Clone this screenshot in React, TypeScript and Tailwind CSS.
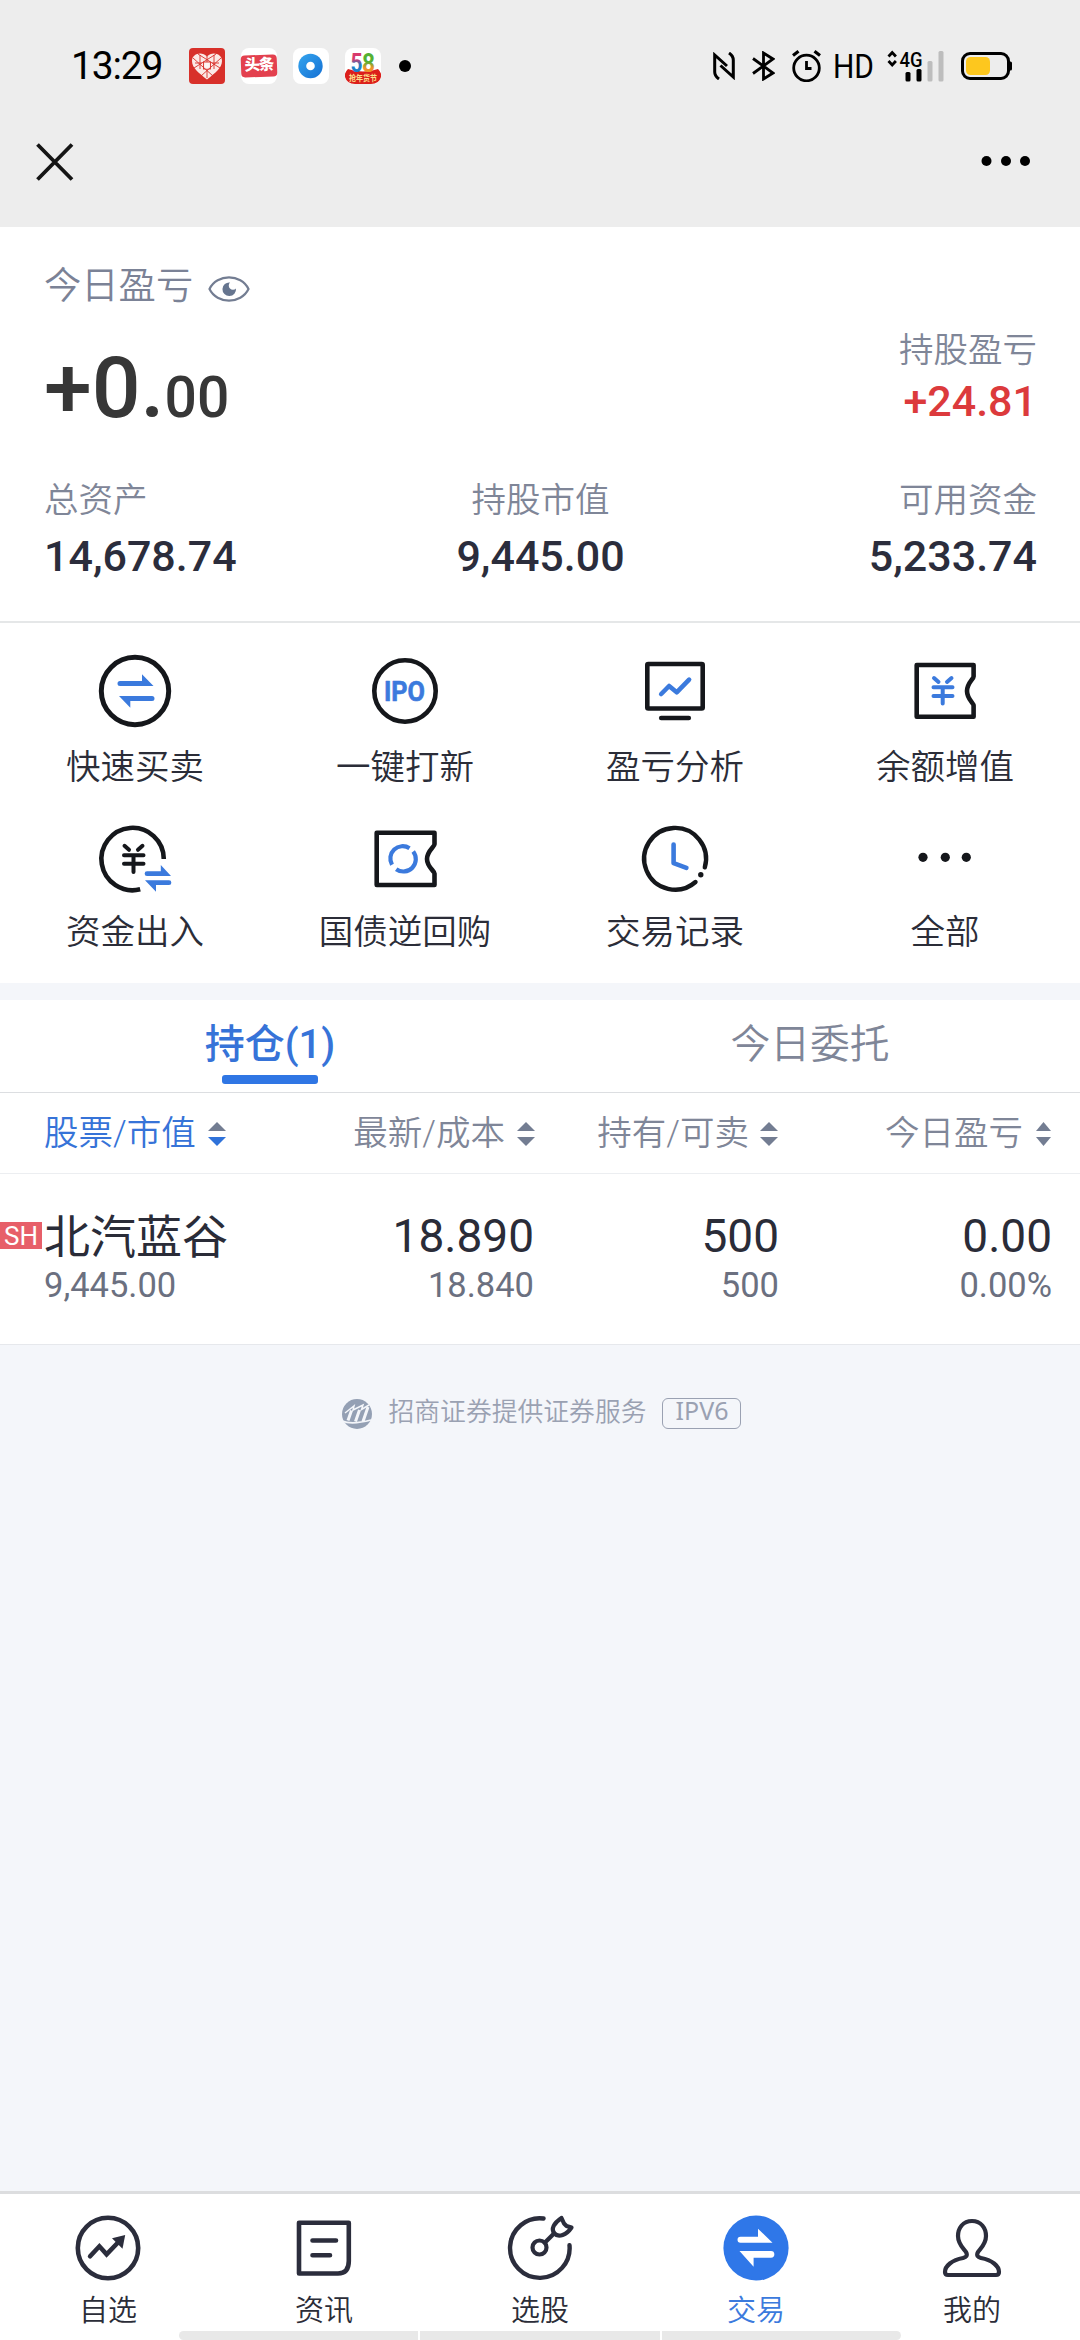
import type { ReactNode } from 'react';

const StatusBar = () => {
    return (
        <div className="flex items-center justify-between h-[132px] pl-[71px] pr-[67px] text-black">
            <div className="flex items-center h-9">
                <span className="w-[118px] text-[39px] leading-9 tracking-[-1.2px]">13:29</span>

                <div className="flex items-center gap-4">
                    <svg width="36" height="36" viewBox="0 0 36 36">
                        <rect width="36" height="36" rx="4" fill="#d8302a" />
                        <path d="M18 31.500C10 25 3 20 3 13c0-7.500 10-10 15-4.500C23 3 33 5.500 33 13c0 7-7 12-15 18.500z" fill="#fbe9e6" />
                        <g stroke="#d8302a" strokeWidth="0.900" fill="none">
                            <path d="M4 10l20 18M9 6l22 14M32 10L12 28M27 6L5 20M18 8v6M18 21v9M11 7v14M25 7v14M6 15h7M23 15h7" />
                            <rect x="14.500" y="14" width="7" height="7" />
                        </g>
                        <path d="M16 16h4M15.500 18h5M16.500 20h3" stroke="#fff" strokeWidth="1" />
                    </svg>

                    <div className="flex items-center w-9 h-9 rounded-lg bg-white">
                        <div className="flex items-center justify-center w-9 h-[22px] rounded-sm bg-[#e3404e] -rotate-2 text-white text-[15.500px] tracking-[-1px] leading-none font-black">
                            头条
                        </div>
                    </div>

                    <svg width="36" height="36" viewBox="0 0 36 36">
                        <defs>
                            <linearGradient id="ring" x1="0" y1="0" x2="1" y2="1">
                                <stop offset="0" stopColor="#35a5ee" />
                                <stop offset="1" stopColor="#1470d4" />
                            </linearGradient>
                        </defs>
                        <rect width="36" height="36" rx="8" fill="#fff" />
                        <circle cx="17.500" cy="18" r="12.200" fill="url(#ring)" />
                        <circle cx="17.500" cy="18" r="4.300" fill="#fff" />
                    </svg>

                    <svg width="36" height="36" viewBox="0 0 36 36">
                        <defs>
                            <linearGradient id="five" x1="0" y1="0" x2="0" y2="1">
                                <stop offset="0.350" stopColor="#d83a6c" />
                                <stop offset="0.550" stopColor="#1f7fc8" />
                            </linearGradient>
                            <linearGradient id="eight" x1="0" y1="0" x2="0" y2="1">
                                <stop offset="0.450" stopColor="#55b033" />
                                <stop offset="0.650" stopColor="#f0922a" />
                            </linearGradient>
                        </defs>
                        <rect width="36" height="36" rx="8" fill="#fff" />
                        <path d="M3 21q-4 4-3 8 2 7 10 7h16q8 0 10-7 1-4-3-8-15 5-30 0z" fill="#dc1f1b" />
                        <text x="5.500" y="24" fontSize="25" fontWeight="700" textLength="12" lengthAdjust="spacingAndGlyphs" fill="url(#five)">5</text>
                        <text x="17" y="24" fontSize="25" fontWeight="700" textLength="13" lengthAdjust="spacingAndGlyphs" fill="url(#eight)">8</text>
                        <text x="4" y="33" fontSize="8" fontWeight="700" textLength="28" lengthAdjust="spacingAndGlyphs" fill="#fbe08b">抢年货节</text>
                    </svg>
                </div>

                <span className="w-3 h-3 ml-[18px] rounded-full bg-black" />
            </div>

            <div className="flex items-center h-9">
                <svg width="22" height="28" viewBox="0 0 22 28" fill="none" stroke="#000" strokeWidth="3">
                    <path d="M6 27C3 25 1.700 23 1.700 20V3L14 14" />
                    <path d="M16 1c3 2 4.300 4 4.300 7v17L7.500 13.500" />
                </svg>
                <svg className="ml-[17px]" width="23" height="30" viewBox="0 0 23 30" fill="none" stroke="#000" strokeWidth="2.8">
                    <path d="M1 7.500l20 14.500-9.500 6V2L21 8 1 22.500" />
                </svg>
                <svg className="ml-[17px]" width="30" height="32" viewBox="0 0 30 32" fill="none" stroke="#000" strokeWidth="2.8">
                    <circle cx="14.500" cy="18" r="12.800" />
                    <path d="M1 5.500L6.500 1.300M28 5.500l-5.500-4.200" strokeWidth="3.2" />
                    <path d="M14.500 11v7.500h5" />
                </svg>
                <svg className="ml-[11px] overflow-visible" width="54" height="44" viewBox="0 0 54 44">
                    <text x="0" y="34" fontSize="33.500" textLength="41" lengthAdjust="spacingAndGlyphs">HD</text>
                </svg>

                <svg className="overflow-visible" width="58" height="32" viewBox="0 0 58 32">
                    <path d="M1.500 6.500l3.700-4 3.700 4M1.500 11l3.700 4 3.700-4" fill="none" stroke="#000" strokeWidth="2.8" />
                    <text x="12.500" y="16.500" fontSize="20" fontWeight="500" textLength="23" lengthAdjust="spacingAndGlyphs">4G</text>
                    <rect x="18.500" y="22" width="5" height="9.500" rx="1.500" />
                    <rect x="29.500" y="19" width="5" height="12.500" rx="1.500" />
                    <rect x="40.500" y="11" width="5" height="20.500" rx="1.500" fill="#bdbdbd" />
                    <rect x="51.500" y="1" width="5" height="30.500" rx="1.500" fill="#bdbdbd" />
                </svg>

                <svg className="ml-[16px]" width="52" height="28" viewBox="0 0 52 28">
                    <rect x="1.500" y="1.500" width="46" height="25" rx="7.500" fill="none" stroke="#000" strokeWidth="3" />
                    <rect x="5" y="5" width="24" height="18" rx="4.500" fill="#fdc71e" />
                    <path d="M48 9.500h1.500q1.500 0 1.500 1.500v6q0 1.500-1.500 1.500H48z" />
                </svg>
            </div>
        </div>
    );
};

const TitleBar = () => {
    return (
        <div className="flex items-start justify-between h-[95px] pt-[11px] px-9">
            <svg width="38" height="38" viewBox="0 0 38 38" stroke="#151515" strokeWidth="3.800">
                <path d="M1.500 1.500l34.500 35M36 1.500l-34.500 35" />
            </svg>
            <svg className="mr-[13px]" width="50" height="38" viewBox="0 0 50 38">
                <circle cx="5.500" cy="18" r="5" />
                <circle cx="25" cy="18" r="5" />
                <circle cx="44" cy="18" r="5" />
            </svg>
        </div>
    );
};

const Summary = () => {
    return (
        <section className="h-[394px] pl-11 pr-[43px] bg-white">
            <div className="flex items-center h-[114px] pt-1.5">
                <span className="text-[37.300px] text-[#7b8296] font-[350]">今日盈亏</span>
                <svg className="ml-[15px] mt-[3px]" width="42" height="28" viewBox="-21 -14 42 28">
                    <path d="M-19.500 0C-12-15.500 12-15.500 19.500 0 12 15.500-12 15.500-19.500 0z" fill="none" stroke="#737d92" strokeWidth="2.200" />
                    <path d="M1-6.500A6.800 6.800 0 1 0 7-.500 4 4 0 0 1 1-6.500z" fill="#66758f" />
                </svg>
            </div>

            <div className="flex justify-between h-[136px]">
                <p className="pt-px font-medium text-[86px] leading-[92px] text-[#373737]">
                    +0.<span className="text-[57px]">00</span>
                </p>
                <div className="flex flex-col items-end">
                    <span className="text-[34.500px] leading-[40px] mt-[-11px] text-[#7f8698] font-[350]">持股盈亏</span>
                    <span className="text-[43px] leading-[50px] mt-[6px] font-medium text-[#dc3a3c]">+24.81</span>
                </div>
            </div>

            <div className="flex justify-between">
                <div className="flex flex-col items-start w-1/3">
                    <span className="text-[34.500px] leading-[44px] pt-px text-[#7f8698] font-[350]">总资产</span>
                    <span className="text-[43px] leading-[50px] mt-[9px] font-medium text-[#2b2d3c]">14,678.74</span>
                </div>
                <div className="flex flex-col items-center w-1/3">
                    <span className="text-[34.500px] leading-[44px] pt-px text-[#7f8698] font-[350]">持股市值</span>
                    <span className="text-[43px] leading-[50px] mt-[9px] font-medium text-[#2b2d3c]">9,445.00</span>
                </div>
                <div className="flex flex-col items-end w-1/3">
                    <span className="text-[34.500px] leading-[44px] pt-px text-[#7f8698] font-[350]">可用资金</span>
                    <span className="text-[43px] leading-[50px] mt-[9px] font-medium text-[#2b2d3c]">5,233.74</span>
                </div>
            </div>
        </section>
    );
};

const MenuIcon = ({ children }: { children: ReactNode }) => (
    <svg width="76" height="76" viewBox="-38 -38 76 76" fill="none" stroke="#15171b" strokeWidth="4.600" strokeLinecap="round" strokeLinejoin="round">
        {children}
    </svg>
);

const menu = [
    {
        label: '快速买卖',
        icon: (
            <MenuIcon>
                <circle r="33.700" strokeWidth="5" />
                <path d="M-15-10H7v-6.700L18.500-5H-15a2.500 2.500 0 0 1 0-5zM-16 5h33a2.500 2.500 0 0 1 0 5H-4.700v6.700z" fill="#3b7add" stroke="none" />
            </MenuIcon>
        ),
    },
    {
        label: '一键打新',
        icon: (
            <MenuIcon>
                <circle r="30.700" />
                <text x="-21" y="10.300" fontSize="28" fontWeight="700" textLength="41" lengthAdjust="spacingAndGlyphs" fill="#3b7add" stroke="#3b7add" strokeWidth="0.600">IPO</text>
            </MenuIcon>
        ),
    },
    {
        label: '盈亏分析',
        icon: (
            <MenuIcon>
                <rect x="-27.700" y="-27" width="55.400" height="44.500" rx="1" />
                <path d="M-13.800 27h27.600" />
                <path d="M-13.800 3l7.900-8 7.600 6.300 12.400-12.600" stroke="#3b7add" />
            </MenuIcon>
        ),
    },
    {
        label: '余额增值',
        icon: (
            <MenuIcon>
                <path d="M-28.300-26H28.600v11.500C28.600-12 22-8 22 0s6.600 12 6.600 14.500V25.700H-28.300z" />
                <path d="M-11-13l4.500 4M6.500-13L2-9M-11.500-3.700H7.500M-11.500 5H7.500M-2.300-3.700V12.500" stroke="#3b7add" strokeWidth="4" />
            </MenuIcon>
        ),
    },
    {
        label: '资金出入',
        icon: (
            <MenuIcon>
                <path d="M28.800 0A31.200 31.200 0 1 0 5.200 30.300" strokeLinecap="butt" />
                <path d="M-10.500-13.200l4.500 4M7.500-13.200l-4.500 4M-11-3.700H8.500M-11 4.800H8.500M-1.500-3.700V13" strokeWidth="4" />
                <path d="M12 12.300h13.800V6L36 17H12a2.300 2.300 0 0 1 0-4.700zM10 21.300h24a2.300 2.300 0 0 1 0 4.700H21v6.700z" fill="#3b7add" stroke="none" />
            </MenuIcon>
        ),
    },
    {
        label: '国债逆回购',
        icon: (
            <MenuIcon>
                <path d="M-28.300-26.200H29.500v11.500C29.500-12.200 22-8 22 0s7.500 12 7.500 14.500V26H-28.300z" />
                <path d="M-13 5.800A12.400 12.400 0 0 1 4.500-10.800M8.200-7.500A12.400 12.400 0 0 1-8.800 10.200" stroke="#3b7add" strokeWidth="4.200" strokeLinecap="butt" />
            </MenuIcon>
        ),
    },
    {
        label: '交易记录',
        icon: (
            <MenuIcon>
                <path d="M29.800 8.300A30.900 30.900 0 1 0 20.500 23" strokeWidth="4.400" />
                <circle cx="25.800" cy="15.700" r="2.700" fill="#15171b" stroke="none" />
                <path d="M-1.400-14.500V4.200l12.800 4.600" stroke="#3b7add" />
            </MenuIcon>
        ),
    },
    {
        label: '全部',
        icon: (
            <MenuIcon>
                <g fill="#15171b" stroke="none">
                    <circle cx="-22" cy="-1.700" r="4.600" />
                    <circle cx="0.300" cy="-1.700" r="4.600" />
                    <circle cx="21.300" cy="-1.700" r="4.600" />
                </g>
            </MenuIcon>
        ),
    },
];

const Menu = () => {
    return (
        <section className="grid grid-cols-4 content-start gap-y-[27px] h-[362px] pt-[30px] border-t-2 border-[#e5e7e8] bg-white">
            {menu.map((item, i) => (
                <div key={item.label} className="flex flex-col items-center h-[141px]">
                    {item.icon}
                    <span className={i < 4 ? 'mt-[16px] text-[34.500px] leading-[44px] text-[#2b2d38] font-[350]' : 'mt-[13px] text-[34.500px] leading-[44px] text-[#2b2d38] font-[350]'}>
                        {item.label}
                    </span>
                </div>
            ))}
        </section>
    );
};

const Sort = ({ active = false, small = false }: { active?: boolean; small?: boolean }) => (
    <svg width={small ? 15 : 18} height="24" viewBox="0 0 18 24" preserveAspectRatio="none" className="shrink-0">
        <path d="M9 0l9 9H0z" fill="#737d92" />
        <path d="M9 24l9-9H0z" fill={active ? '#2f72da' : '#737d92'} />
    </svg>
);

const Positions = () => {
    return (
        <section className="bg-white border-b border-[#e6e8ec]">
            <div className="flex h-[93px] border-b border-[#dcdee1]">
                <div className="flex flex-col items-center w-1/2 pt-[20px]">
                    <span className="text-[40px] leading-[50px] font-medium text-[#3673d8]">持仓(1)</span>
                    <span className="w-24 h-[9px] mt-[5px] rounded-[3px] bg-[#2f76e4]" />
                </div>
                <div className="flex flex-col items-center w-1/2 pt-[20px]">
                    <span className="text-[39.800px] leading-[50px] text-[#7f8698] font-[350]">今日委托</span>
                </div>
            </div>

            <div className="flex items-center h-[81px] pt-px pl-11 pr-[29px] border-b border-[#eceef1] text-[34.500px] text-[#7f8698] font-[350]">
                <div className="flex items-center gap-3 text-[#3673d8]">
                    <span>股票/市值</span>
                    <Sort active />
                </div>
                <div className="flex items-center justify-end gap-3 grow">
                    <span>最新/成本</span>
                    <Sort />
                </div>
                <div className="flex items-center justify-end gap-[11px] w-[243px]">
                    <span>持有/可卖</span>
                    <Sort />
                </div>
                <div className="flex items-center justify-end gap-[13px] w-[273px]">
                    <span>今日盈亏</span>
                    <Sort small />
                </div>
            </div>

            <div className="flex h-[170px] pt-[35px] pr-[28px] text-[46px] leading-[54px] text-[#2a2c38]">
                <div className="flex items-start">
                    <span className="flex items-center justify-center w-[42px] h-[27px] mt-[13px] mr-[2px] bg-[#e75f69] text-white text-[26px] leading-none">SH</span>
                    <div className="flex flex-col">
                        <span className="pt-[2px] leading-[52px]">北汽蓝谷</span>
                        <span className="text-[34.500px] leading-[44px] text-[#6b7080]">9,445.00</span>
                    </div>
                </div>
                <div className="flex flex-col items-end grow">
                    <span>18.890</span>
                    <span className="text-[34.500px] leading-[44px] text-[#6b7080]">18.840</span>
                </div>
                <div className="flex flex-col items-end w-[245px]">
                    <span>500</span>
                    <span className="text-[34.500px] leading-[44px] text-[#6b7080]">500</span>
                </div>
                <div className="flex flex-col items-end w-[273px]">
                    <span>0.00</span>
                    <span className="text-[34.500px] leading-[44px] text-[#6b7080]">0.00%</span>
                </div>
            </div>
        </section>
    );
};

const Provider = () => {
    return (
        <div className="flex justify-center grow pt-[50px] pl-[2px] text-[#9aa1b2]">
            <svg className="mt-[3px]" width="32" height="32" viewBox="-16 -16 32 32">
                <circle r="15" fill="#94a0b4" />
                <g fill="none" stroke="#f4f6fa">
                    <path d="M-9 6.500l3.500-10M-1.500 7.500L2.500-4M6 7.500L11-7" strokeWidth="3" />
                    <path d="M-12-1L-3-8l-1 4L6-9 4.500-4.500 12-9" strokeWidth="1.500" />
                    <path d="M-15 7q10 4 29-1" strokeWidth="1.800" />
                </g>
            </svg>
            <span className="ml-[16px] text-[25.800px] leading-[34px] font-[350]">招商证券提供证券服务</span>
            <span className="flex justify-center w-[79px] h-[31px] ml-[16px] mt-[3px] border border-[#9aa1b2] rounded-md font-['Noto_Sans'] text-[25px] leading-[22px]">IPV6</span>
        </div>
    );
};

const NavIcon = ({ children }: { children: ReactNode }) => (
    <svg width="70" height="70" viewBox="-35 -35 70 70" fill="none" stroke="#2b2d3c" strokeWidth="4.600" strokeLinecap="round" strokeLinejoin="round">
        {children}
    </svg>
);

const navItems = [
    {
        label: '自选',
        icon: (
            <NavIcon>
                <circle r="30.200" />
                <path d="M-17.900 8.300l9.300-10 7.200 8L10-5.500" strokeLinejoin="miter" />
                <path d="M17.200-13L4-9.700 14.500.700z" fill="#2b2d3c" stroke="none" />
            </NavIcon>
        ),
    },
    {
        label: '资讯',
        icon: (
            <NavIcon>
                <path d="M-25-25.200H24.800V13Q24.800 25.500 14 25.500H-25z" />
                <path d="M-11.500-7.500H12M-11.500 7.300H6" />
            </NavIcon>
        ),
    },
    {
        label: '选股',
        icon: (
            <NavIcon>
                <path d="M29.500-2.700A29.800 29.800 0 1 1 3.500-29.500" strokeWidth="4.400" />
                <circle cx="-.500" cy="-.500" r="7" strokeWidth="4.200" />
                <path d="M5-5.500L14-14.500" strokeWidth="4.200" />
                <path d="M21.500-30C14-25 10.500-19 14.500-14.500S26.500-13 31.500-20.500L26.500-22 24-24.500z" strokeWidth="4.200" />
            </NavIcon>
        ),
    },
    {
        label: '交易',
        active: true,
        icon: (
            <NavIcon>
                <circle r="32.600" fill="#2f77e8" stroke="none" />
                <path d="M-15.500-11.200H2v-8.100L16.500-5.200H-15.500a3 3 0 0 1 0-6zM-16.500 3H15a3.300 3.300 0 0 1 0 6.700H-2.400v9z" fill="#fff" stroke="none" />
            </NavIcon>
        ),
    },
    {
        label: '我的',
        icon: (
            <NavIcon>
                <path d="M0-27C-9-27-14-20-14-12-14-4-9 0-6 4-4 8-6 9-9 10-20 12-27 18-27 24q0 3 3 3H24q3 0 3-3C27 18 20 12 9 10 6 9 4 8 6 4 9 0 14-4 14-12 14-20 9-27 0-27z" strokeWidth="4.200" />
            </NavIcon>
        ),
    },
];

const BottomNav = () => {
    return (
        <nav className="flex flex-col justify-between h-[149px] border-t-[3px] border-[#dcdddf] bg-white">
            <div className="grid grid-cols-5 pt-[19px]">
                {navItems.map((item) => (
                    <div key={item.label} className="flex flex-col items-center">
                        {item.icon}
                        <span className={item.active ? 'mt-[11px] text-[29px] leading-[34px] text-[#3b7add] font-[350]' : 'mt-[11px] text-[29px] leading-[34px] text-[#2b2d38] font-[350]'}>
                            {item.label}
                        </span>
                    </div>
                ))}
            </div>

            <div className="flex gap-0.5 w-[722px] h-[9px] mx-auto rounded-full overflow-hidden">
                <span className="grow bg-[#e8e8e8]" />
                <span className="grow bg-[#e8e8e8]" />
                <span className="grow bg-[#e8e8e8]" />
            </div>
        </nav>
    );
};

const App = () => {
    return (
        <div className="flex flex-col w-[1080px] h-[2340px] overflow-hidden bg-[#f4f6fa] font-[Roboto,'Noto_Sans_CJK_SC',sans-serif]">
            <header className="h-[227px] bg-[#ededed]">
                <StatusBar />
                <TitleBar />
            </header>
            <Summary />
            <Menu />
            <div className="h-[17px] shrink-0" />
            <Positions />
            <Provider />
            <BottomNav />
        </div>
    );
};

export default App;
